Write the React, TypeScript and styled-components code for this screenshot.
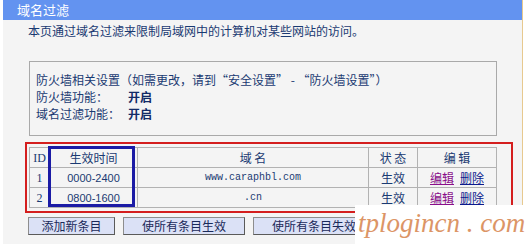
import React from "react";
import styled, { createGlobalStyle } from "styled-components";

const Global = createGlobalStyle`
  html, body {
    margin: 0;
    padding: 0;
    background: #ffffff;
  }
  body {
    font-family: "Noto Sans CJK SC", "Liberation Sans", sans-serif;
    font-size: 12px;
    color: #1a3a72;
  }
`;

const Page = styled.div`
  position: relative;
  width: 531px;
  height: 244px;
  overflow: hidden;
`;

const Panel = styled.div`
  margin-left: 3px;
  width: 519px;
  height: 244px;
  background: #f4f4f4;
  border-right: 1px solid #e7c98f;
  display: flex;
  flex-direction: column;
`;

const Header = styled.div`
  height: 20px;
  background: #6393f0;
  color: #ffffff;
  font-size: 13px;
  line-height: 20px;
  padding-left: 14px;
`;

const Body = styled.div`
  padding: 3px 0 0 25px;
  display: flex;
  flex-direction: column;
`;

const Intro = styled.div`
  line-height: 16px;
  height: 16px;
  color: #1a3a72;
`;

const InfoBox = styled.div`
  margin-top: 22px;
  margin-left: 1px;
  width: 460px;
  border: 1px solid #a9a9a9;
  padding: 9px 0 13px 6px;
`;

const InfoLine = styled.div`
  line-height: 17px;
  height: 17px;
  display: flex;
  white-space: nowrap;
`;

const InfoLabel = styled.span`
  width: 92px;
`;

const InfoValue = styled.span`
  font-weight: bold;
  color: #122a66;
`;

const RedBox = styled.div`
  position: relative;
  margin-top: 6px;
  margin-left: -3px;
  width: 476px;
  border: 2px solid #d41e1e;
  padding: 3px 6px 3px 2px;
`;

const Table = styled.table`
  border-collapse: collapse;
  width: 468px;
  table-layout: fixed;
`;

const Row = styled.tr`
  height: 20px;
`;

const Cell = styled.td<{ $w?: number; $mono?: boolean; $serif?: boolean }>`
  ${(p) => (p.$w ? `width: ${p.$w}px;` : "")}
  padding: 0;
  border: 1px solid #b2b2b2;
  text-align: center;
  vertical-align: middle;
  font-weight: normal;
  line-height: 16px;
  white-space: nowrap;
  overflow: hidden;
  font-family: ${(p) =>
    p.$mono
      ? '"Liberation Mono", monospace'
      : p.$serif
      ? '"Liberation Serif", serif'
      : '"Noto Sans CJK SC", "Liberation Sans", sans-serif'};
  font-size: ${(p) => (p.$mono ? "10px" : "12px")};
`;

const Digits = styled.span`
  font-family: "Liberation Sans", sans-serif;
  font-size: 11px;
`;

const Link = styled.a<{ $visited?: boolean }>`
  color: ${(p) => (p.$visited ? "#8a0f8a" : "#0c1a8c")};
  text-decoration: underline;
  margin: 0 3px;
  cursor: pointer;
`;

const BlueMark = styled.div`
  position: absolute;
  left: 21px;
  top: 2px;
  width: 81px;
  height: 55px;
  border: 3px solid #1b1ba5;
  pointer-events: none;
`;

const ButtonRow = styled.div`
  margin-top: 4px;
  display: flex;
  gap: 8px;
`;

const Button = styled.button<{ $w: number }>`
  width: ${(p) => p.$w}px;
  height: 18px;
  padding: 0;
  background: #dbe1f6;
  border: 1px solid #5a5a5a;
  border-top-color: #8d8d8d;
  border-left-color: #8d8d8d;
  font-family: "Noto Sans CJK SC", "Liberation Sans", sans-serif;
  font-size: 12px;
  line-height: 16px;
  color: #1a2a5a;
`;

const Watermark = styled.div`
  position: absolute;
  left: 355px;
  top: 205px;
  width: 176px;
  height: 39px;
  background: #ffffff;
  font-family: "Liberation Serif", serif;
  font-style: italic;
  font-size: 27px;
  line-height: 36px;
  color: #dc9566;
  padding-left: 3px;
  white-space: nowrap;
`;

const rows = [
  { id: 1, time: "0000-2400", domain: "www.caraphbl.com" },
  { id: 2, time: "0800-1600", domain: ".cn" },
];

export default function App() {
  return (
    <Page>
      <Global />
      <Panel>
        <Header>域名过滤</Header>
        <Body>
          <Intro>本页通过域名过滤来限制局域网中的计算机对某些网站的访问。</Intro>
          <InfoBox>
            <InfoLine>防火墙相关设置（如需更改，请到“安全设置” - “防火墙设置”）</InfoLine>
            <InfoLine>
              <InfoLabel>防火墙功能：</InfoLabel>
              <InfoValue>开启</InfoValue>
            </InfoLine>
            <InfoLine>
              <InfoLabel>域名过滤功能：</InfoLabel>
              <InfoValue>开启</InfoValue>
            </InfoLine>
          </InfoBox>
          <RedBox>
            <Table>
              <thead>
                <Row>
                  <Cell as="th" $w={19} $serif>ID</Cell>
                  <Cell as="th" $w={87}>生效时间</Cell>
                  <Cell as="th" $w={230}>域 名</Cell>
                  <Cell as="th" $w={48}>状 态</Cell>
                  <Cell as="th">编 辑</Cell>
                </Row>
              </thead>
              <tbody>
                {rows.map((r) => (
                  <Row key={r.id}>
                    <Cell $serif>{r.id}</Cell>
                    <Cell>
                      <Digits>{r.time}</Digits>
                    </Cell>
                    <Cell $mono>{r.domain}</Cell>
                    <Cell>生效</Cell>
                    <Cell>
                      <Link $visited>编辑</Link>
                      <Link>删除</Link>
                    </Cell>
                  </Row>
                ))}
              </tbody>
            </Table>
            <BlueMark />
          </RedBox>
          <ButtonRow>
            <Button $w={87}>添加新条目</Button>
            <Button $w={122}>使所有条目生效</Button>
            <Button $w={122}>使所有条目失效</Button>
          </ButtonRow>
        </Body>
      </Panel>
      <Watermark>tplogincn . com</Watermark>
    </Page>
  );
}
